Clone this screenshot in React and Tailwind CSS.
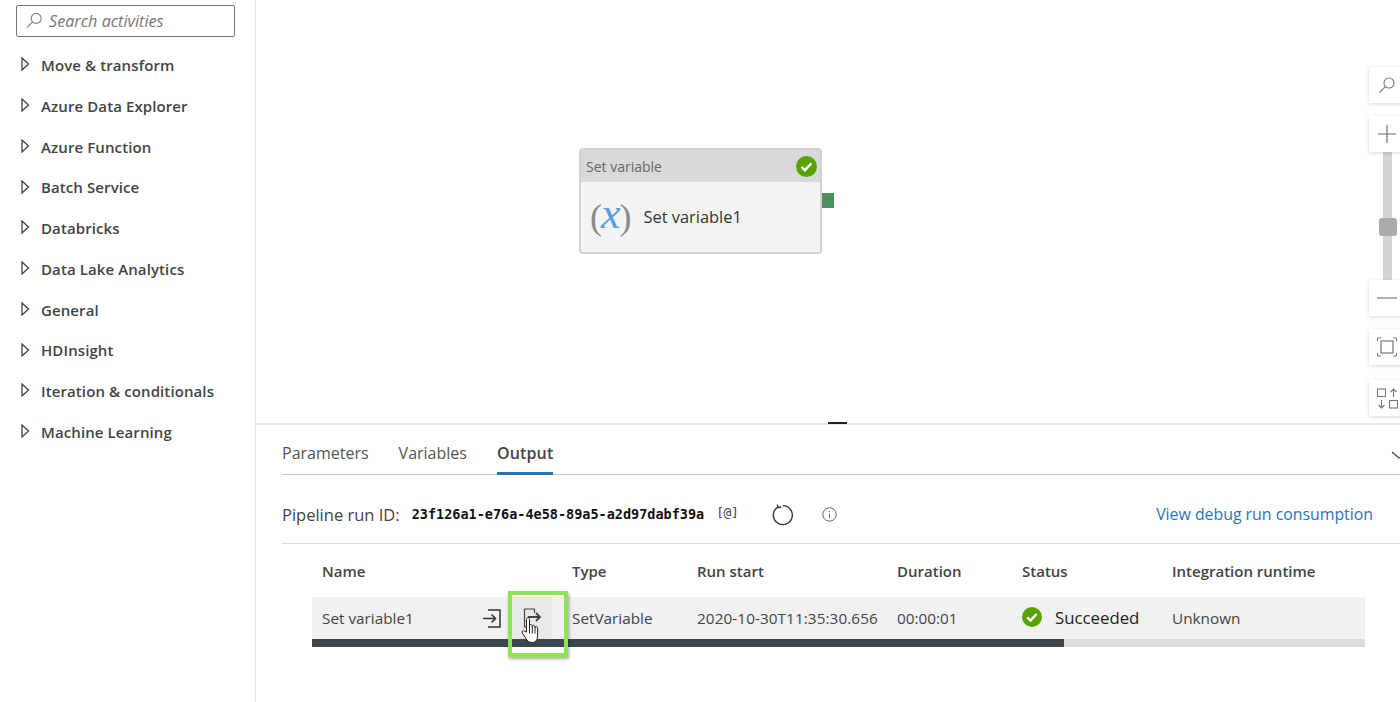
import { useState } from "react";

const FONT = "font-['Open_Sans','Noto_Sans',sans-serif]";

const GROUPS = [
  "Move & transform",
  "Azure Data Explorer",
  "Azure Function",
  "Batch Service",
  "Databricks",
  "Data Lake Analytics",
  "General",
  "HDInsight",
  "Iteration & conditionals",
  "Machine Learning",
];

const TABS = ["Parameters", "Variables", "Output"];

function CheckBadge({ size }) {
  return (
    <svg width={size} height={size} viewBox="0 0 20 20">
      <circle cx="10" cy="10" r="10" fill="#57a300" />
      <path d="M5.3 10.4l3.2 3.1 6.2-6.6" fill="none" stroke="#fff" strokeWidth="2.4" />
    </svg>
  );
}

function Caret() {
  return (
    <svg width="9" height="14" viewBox="0 0 9 14" className="shrink-0">
      <path d="M1 1l6.5 6-6.5 6z" fill="none" stroke="#444" strokeWidth="1.3" />
    </svg>
  );
}

function Sidebar() {
  return (
    <aside className="w-[256px] shrink-0 h-full border-r border-[#e3e3e3] pl-[16px] pr-[20px] pt-[5px]">
      <div className="h-[32px] w-[219px] border border-[#767676] rounded-[2px] flex items-center pl-[8px] gap-[6px]">
        <svg width="18" height="18" viewBox="0 0 18 18" fill="none" stroke="#6a85ad" strokeWidth="1.1">
          <circle cx="11.2" cy="6.4" r="5" />
          <path d="M7.6 10L2 15.6" />
        </svg>
        <span className="text-[16.2px] italic text-[#777] mt-[1px]">Search activities</span>
      </div>
      <ul className="mt-[8px]">
        {GROUPS.map((g) => (
          <li key={g} className="h-[40.75px] flex items-center pl-[5px] gap-[11px]">
            <span className="-mt-[2px]">
              <Caret />
            </span>
            <span className="text-[15px] font-semibold text-[#444] tracking-[0.1px]">{g}</span>
          </li>
        ))}
      </ul>
    </aside>
  );
}

function ToolButton({ className, children }) {
  return (
    <div
      className={`absolute left-[1113px] w-[36px] h-[36px] bg-white shadow-[0_1px_4px_rgba(0,0,0,0.16)] flex items-center justify-center ${className}`}
    >
      {children}
    </div>
  );
}

function ActivityNode() {
  return (
    <div className="absolute left-[323px] top-[148px] w-[243px] h-[106px] border-2 border-[#d2d2d2] rounded-[4px] bg-[#f3f3f3]">
      <div className="h-[32px] bg-[#d9d9d9] flex items-center justify-between pl-[5px] pr-[3px]">
        <span className="text-[14px] text-[#666]">Set variable</span>
        <CheckBadge size={21} />
      </div>
      <div className="flex items-center h-[70px] pl-[9px] gap-[12px]">
        <span className="font-['Liberation_Serif',serif] text-[36px] leading-none text-[#8a8a8a] flex items-center">
          (<span className="italic text-[#5f9be0] text-[44px] leading-none -mt-[6px] -mx-[1px]">x</span>)
        </span>
        <span className="text-[16.4px] text-[#333]">Set variable1</span>
      </div>
      <div className="absolute left-[241px] top-[43px] w-[12px] h-[15px] bg-[#4b9160]" />
    </div>
  );
}

function Canvas() {
  return (
    <div className="relative h-[423px] shrink-0">
      <ActivityNode />
      <ToolButton className="top-[67px]">
        <svg width="20" height="20" viewBox="0 0 20 20" fill="none" stroke="#777" strokeWidth="1.1">
          <circle cx="12" cy="8" r="5" />
          <path d="M8.4 11.6L2.5 17.5" />
        </svg>
      </ToolButton>
      <div className="absolute left-[1127px] top-[150px] w-[9px] h-[131px] bg-[#d4d4d4]" />
      <ToolButton className="top-[116px]">
        <svg width="18" height="18" viewBox="0 0 18 18" stroke="#666" strokeWidth="1.1">
          <path d="M0 9h18M9 0v18" />
        </svg>
      </ToolButton>
      <div className="absolute left-[1123px] top-[218px] w-[18px] h-[18px] rounded-[3px] bg-[#ababab]" />
      <ToolButton className="top-[280px]">
        <svg width="20" height="4" viewBox="0 0 20 4" stroke="#777" strokeWidth="1.1">
          <path d="M0 2h20" />
        </svg>
      </ToolButton>
      <ToolButton className="top-[329px]">
        <svg width="20" height="20" viewBox="0 0 20 20" fill="none" stroke="#777">
          <rect x="4" y="4" width="12" height="12" strokeWidth="1.2" />
          <path d="M0.5 4V1H4M16 1h3.5v3M0.5 16v3H4M16 19h3.5v-3" strokeWidth="1" />
        </svg>
      </ToolButton>
      <ToolButton className="top-[380px]">
        <svg width="21" height="21" viewBox="0 0 21 21" fill="none" stroke="#777" strokeWidth="1.1">
          <rect x="0.5" y="1" width="8" height="7.5" />
          <rect x="12.5" y="12.5" width="8" height="7.5" />
          <path d="M16.5 9V1M13.5 4l3-3 3 3M4.5 12v8M1.5 17l3 3 3-3" />
        </svg>
      </ToolButton>
    </div>
  );
}

function Tabs() {
  const [tab, setTab] = useState("Output");
  return (
    <div className="flex gap-[30px] h-[50px] ml-[26px] border-b border-[#c8c8c8]">
      {TABS.map((t) => (
        <button
          key={t}
          onClick={() => setTab(t)}
          className={`h-[50px] pt-[8px] text-[16px] border-b-[3px] ${
            tab === t ? "font-semibold text-[#444] border-[#2b72bd] tracking-[0.15px]" : "text-[#555] border-transparent"
          }`}
        >
          {t}
        </button>
      ))}
    </div>
  );
}

function RunIdRow() {
  return (
    <div className="h-[69px] ml-[26px] pt-[12px] border-b border-[#dcdcdc] flex items-center">
      <span className="text-[16.5px] text-[#444] mr-[12px]">Pipeline run ID:</span>
      <span className="font-['DejaVu_Sans_Mono',monospace] font-bold text-[13.5px] text-[#111] -mt-[2px]">
        23f126a1-e76a-4e58-89a5-a2d97dabf39a
      </span>
      <span className="font-['DejaVu_Sans_Mono',monospace] text-[13px] text-[#444] ml-[12px] -mt-[4px] tracking-[-0.5px]">[@]</span>
      <svg width="22" height="22" viewBox="0 0 22 22" fill="none" stroke="#333" strokeWidth="1.4" className="ml-[34px]">
        <path d="M6.2 2.8A9.5 9.5 0 1 0 11 1.6" />
        <path d="M5.2 0.6l1 3 3-.6" />
      </svg>
      <svg width="15" height="15" viewBox="0 0 15 15" fill="none" stroke="#666" className="ml-[28px] -mt-[1px]">
        <circle cx="7.5" cy="7.5" r="6.7" />
        <path d="M7.5 6.5v4.5M7.5 4v1.2" />
      </svg>
      <a className="ml-auto mr-[27px] text-[15.85px] text-[#2b72bd]">View debug run consumption</a>
    </div>
  );
}

const COLS = "grid grid-cols-[250px_125px_200px_125px_150px_1fr]";

function HandCursor() {
  return (
    <svg width="22" height="28" viewBox="0 0 22 28" className="absolute left-[209px] top-[72px]">
      <path
        d="M5.5 16V3.5c0-2.4 3-2.4 3 0V10c0-2 2.8-2 2.8 0v.8c0-2 2.7-2 2.7 0v1c0-1.7 2.6-1.7 2.6 0v7.7c0 4-1.8 7-5.4 7-3.7 0-4.8-1.8-6.4-4.3L1.3 17c-1-1.8 1-3 2.3-1.7z"
        fill="#fff"
        stroke="#222"
        strokeWidth="1"
      />
      <path d="M8.5 10v7.5M11.3 10.5v7M14 11.5v6" stroke="#222" strokeWidth="1" fill="none" />
    </svg>
  );
}

function RunTable() {
  return (
    <div className="relative ml-[56px] mr-[35px] text-[15.3px]">
      <div className={`${COLS} h-[53px] pl-[10px] pt-[1px] items-center text-[15px] font-semibold text-[#444]`}>
        <span>Name</span>
        <span>Type</span>
        <span>Run start</span>
        <span>Duration</span>
        <span>Status</span>
        <span>Integration runtime</span>
      </div>
      <div className={`${COLS} h-[42px] pl-[10px] items-center bg-[#f1f1f1] text-[#444]`}>
        <div className="relative h-full flex items-center">
          <span>Set variable1</span>
          <svg width="19" height="19" viewBox="0 0 19 19" fill="none" stroke="#333" strokeWidth="1.5" className="absolute left-[160px] top-[12px]">
            <path d="M6 1h12v17H6M1 9.5h12M9.5 5.5l4 4-4 4" />
          </svg>
          <div className="absolute left-[190px] top-0 w-[40px] h-[42px] bg-[#e9e9e9]" />
          <svg width="20" height="22" viewBox="0 0 20 22" fill="none" stroke="#444" className="absolute left-[201px] top-[11px]">
            <path d="M1.5 1h10v4M1.5 1v18h4" strokeWidth="1.2" />
            <path d="M5 9h12M13 5l4 4-4 4" strokeWidth="1.8" />
          </svg>
        </div>
        <span>SetVariable</span>
        <span className="tracking-[0.08px]">2020-10-30T11:35:30.656</span>
        <span>00:00:01</span>
        <span className="flex items-center gap-[13px] text-[#222]">
          <span className="-mt-[2px]">
            <CheckBadge size={20} />
          </span>
          <span className="text-[16.8px]">Succeeded</span>
        </span>
        <span>Unknown</span>
      </div>
      <div className="h-[8px] bg-[#dcdcdc]">
        <div className="h-full w-[752px] bg-[#3d464f]" />
      </div>
      <div className="absolute left-[196px] top-[47px] w-[60px] h-[66px] border-[4px] border-[#8ee64e] shadow-[1px_2px_3px_rgba(0,0,0,0.35)]" />
      <HandCursor />
    </div>
  );
}

export default function App() {
  return (
    <div className={`h-[702px] w-[1400px] flex overflow-hidden bg-white ${FONT}`}>
      <Sidebar />
      <main className="relative flex-1 flex flex-col min-w-0">
        <Canvas />
        <div className="h-[2px] bg-[#e8e8e8] relative">
          <div className="absolute left-[572px] -top-[1px] w-[19px] h-[2px] bg-[#222]" />
        </div>
        <Tabs />
        <RunIdRow />
        <RunTable />
        <svg width="12" height="8" viewBox="0 0 12 8" fill="none" stroke="#444" strokeWidth="1.2" className="absolute left-[1135px] top-[451px]">
          <path d="M1 1l7 6 4-3" />
        </svg>
      </main>
    </div>
  );
}
